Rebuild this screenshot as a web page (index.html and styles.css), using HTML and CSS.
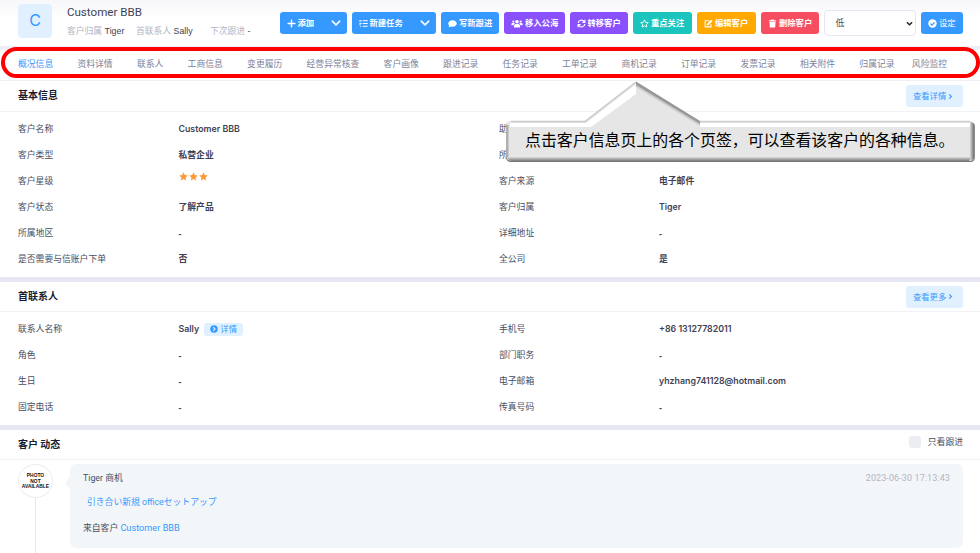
FILE: index.html
```html
<!DOCTYPE html>
<html lang="zh-CN">
<head>
    <meta charset="UTF-8">
    <meta name="viewport" content="width=device-width, initial-scale=1.0">
    <title>Customer BBB</title>
    <link rel="stylesheet" href="styles.css">
</head>
<body>
    <div class="page">
        <header class="header">
            <div class="avatar">C</div>
            <div class="customer">
                <div class="customer-name">Customer BBB</div>
                <div class="customer-meta">
                    <span class="meta-owner">客户归属 <b>Tiger</b></span>
                    <span class="meta-contact">首联系人 <b>Sally</b></span>
                    <span>下次跟进 <b>-</b></span>
                </div>
            </div>
            <div class="toolbar">
                <div class="btn blue w-add">
                    <svg viewBox="0 0 16 16"><path d="M8 2v12M2 8h12" stroke="#fff" stroke-width="2.6" stroke-linecap="round"/></svg>
                    <span>添加</span>
                    <svg class="caret" viewBox="0 0 16 16"><path d="M2 5l6 6 6-6" fill="none" stroke="#fff" stroke-width="2.4" stroke-linecap="round"/></svg>
                </div>
                <div class="btn blue w-task">
                    <svg viewBox="0 0 16 16"><path d="M.5 3l1.300 1.300L4.500 1.800M.5 8l1.300 1.300L4.500 6.800M6.500 3H15.500M6.500 8H15.500M6.500 13H15.500M1.500 13h2.200" fill="none" stroke="#fff" stroke-width="1.800"/></svg>
                    <span>新建任务</span>
                    <svg class="caret" viewBox="0 0 16 16"><path d="M2 5l6 6 6-6" fill="none" stroke="#fff" stroke-width="2.4" stroke-linecap="round"/></svg>
                </div>
                <div class="btn blue w-follow">
                    <svg viewBox="0 0 16 16"><path d="M8 2C3.800 2 .5 4.700.5 8c0 1.500.6 2.700 1.700 3.800C2 13 1 14.200.5 14.800c1.800 0 3.400-.7 4.500-1.500 1 .4 2 .6 3 .6 4.200 0 7.500-2.600 7.500-5.900S12.200 2 8 2z" fill="#fff"/></svg>
                    <span>写新跟进</span>
                </div>
                <div class="btn purple w-sea">
                    <svg class="wide" viewBox="0 0 20 16"><g fill="#fff"><circle cx="3.500" cy="4.500" r="2"/><circle cx="16.500" cy="4.500" r="2"/><circle cx="10" cy="5" r="3.200"/><path d="M0 11V9.500C0 8.200 1 7.300 2.200 7.300h2.600c.5 0 1 .2 1.400.5C4.900 8.600 4 9.700 3.900 11zM20 11V9.500c0-1.300-1-2.200-2.200-2.200h-2.600c-.5 0-1 .2-1.400.5 1.300.8 2.200 1.900 2.300 3.200zM4.500 14v-1.500C4.500 10.500 6 9 8 9h4c2 0 3.500 1.500 3.500 3.500V14c0 .6-.4 1-1 1h-9c-.6 0-1-.4-1-1z"/></g></svg>
                    <span>移入公海</span>
                </div>
                <div class="btn purple w-transfer">
                    <svg viewBox="0 0 16 16"><path d="M2 7a6 6 0 0 1 10.800-2.500M14 9A6 6 0 0 1 3.200 11.500M14 1.500V6H9.500M2 14.500V10h4.500" fill="none" stroke="#fff" stroke-width="2.100"/></svg>
                    <span>转移客户</span>
                </div>
                <div class="btn teal w-star">
                    <svg viewBox="0 0 16 16"><path d="M8 1.500l2 4.300 4.700.6-3.500 3.200.9 4.700L8 12l-4.100 2.300.9-4.700L1.300 6.400 6 5.800z" fill="none" stroke="#fff" stroke-width="1.600" stroke-linejoin="round"/></svg>
                    <span>重点关注</span>
                </div>
                <div class="btn orange w-edit">
                    <svg viewBox="0 0 16 16"><path d="M9.500 3H2v11h10.500V9.500" fill="none" stroke="#fff" stroke-width="1.900" stroke-linejoin="round"/><path d="M5.500 8.500L12.800 1.200l2.400 2.400L8 10.900l-3 .5z" fill="#fff"/></svg>
                    <span>编辑客户</span>
                </div>
                <div class="btn red w-delete">
                    <svg viewBox="0 0 16 16"><path d="M1.500 2h4l.8-1h3.400l.8 1h4v2h-13zM2.500 5h11l-.7 9c0 .8-.6 1.300-1.400 1.300H4.600c-.8 0-1.400-.5-1.400-1.300z" fill="#fff"/></svg>
                    <span>删除客户</span>
                </div>
                <div class="select">
                    <span>低</span>
                    <svg viewBox="0 0 16 16"><path d="M2 5l6 6 6-6" fill="none" stroke="#222" stroke-width="3.200"/></svg>
                </div>
                <div class="btn blue w-set">
                    <svg viewBox="0 0 16 16"><circle cx="8" cy="8" r="7.500" fill="#fff"/><path d="M4.300 8.200l2.700 2.600 4.700-5" fill="none" stroke="#3699ff" stroke-width="2"/></svg>
                    <span class="light">设定</span>
                </div>
            </div>
        </header>

        <nav class="tabs">
            <span class="tab active">概况信息</span>
            <span class="tab">资料详情</span>
            <span class="tab">联系人</span>
            <span class="tab">工商信息</span>
            <span class="tab">变更履历</span>
            <span class="tab">经营异常核查</span>
            <span class="tab">客户画像</span>
            <span class="tab">跟进记录</span>
            <span class="tab">任务记录</span>
            <span class="tab">工单记录</span>
            <span class="tab">商机记录</span>
            <span class="tab">订单记录</span>
            <span class="tab">发票记录</span>
            <span class="tab">相关附件</span>
            <span class="tab">归属记录</span>
            <span class="tab last">风险监控</span>
        </nav>

        <section class="card basic">
            <div class="card-head">
                <h3>基本信息</h3>
                <div class="more">查看详情<svg viewBox="0 0 8 12"><path d="M2 2.500l3.500 3.500L2 9.500" fill="none" stroke="#3699ff" stroke-width="2"/></svg></div>
            </div>
            <div class="fields">
                <div class="label">客户名称</div><div class="value">Customer BBB</div>
                <div class="label">助</div><div class="value"></div>
                <div class="label">客户类型</div><div class="value">私营企业</div>
                <div class="label">所</div><div class="value"></div>
                <div class="label">客户星级</div>
                <div class="value stars">
                    <svg viewBox="0 0 16 16"><path d="M8 .5l2.300 4.800 5.200.7-3.800 3.700.9 5.200L8 12.400l-4.600 2.500.9-5.200L.5 6l5.200-.7z"/></svg>
                    <svg viewBox="0 0 16 16"><path d="M8 .5l2.300 4.800 5.200.7-3.800 3.700.9 5.200L8 12.400l-4.600 2.500.9-5.200L.5 6l5.200-.7z"/></svg>
                    <svg viewBox="0 0 16 16"><path d="M8 .5l2.300 4.800 5.200.7-3.800 3.700.9 5.200L8 12.400l-4.600 2.500.9-5.200L.5 6l5.200-.7z"/></svg>
                </div>
                <div class="label">客户来源</div><div class="value">电子邮件</div>
                <div class="label">客户状态</div><div class="value">了解产品</div>
                <div class="label">客户归属</div><div class="value">Tiger</div>
                <div class="label">所属地区</div><div class="value dash">-</div>
                <div class="label">详细地址</div><div class="value dash">-</div>
                <div class="label">是否需要与信账户下单</div><div class="value">否</div>
                <div class="label">全公司</div><div class="value">是</div>
            </div>
        </section>

        <section class="card contact">
            <div class="card-head">
                <h3>首联系人</h3>
                <div class="more">查看更多<svg viewBox="0 0 8 12"><path d="M2 2.500l3.500 3.500L2 9.500" fill="none" stroke="#3699ff" stroke-width="2"/></svg></div>
            </div>
            <div class="fields">
                <div class="label">联系人名称</div>
                <div class="value">Sally
                    <span class="detail"><svg viewBox="0 0 16 16"><circle cx="8" cy="8" r="7.500" fill="#3699ff"/><path d="M6.300 4.200L10 8l-3.700 3.800" fill="none" stroke="#e1f0ff" stroke-width="2.200"/></svg>详情</span>
                </div>
                <div class="label">手机号</div><div class="value">+86 13127782011</div>
                <div class="label">角色</div><div class="value dash">-</div>
                <div class="label">部门职务</div><div class="value dash">-</div>
                <div class="label">生日</div><div class="value dash">-</div>
                <div class="label">电子邮箱</div><div class="value">yhzhang741128@hotmail.com</div>
                <div class="label">固定电话</div><div class="value dash">-</div>
                <div class="label">传真号码</div><div class="value dash">-</div>
            </div>
        </section>

        <section class="card activity">
            <div class="card-head">
                <h3>客户 动态</h3>
                <div class="only-follow"><i class="checkbox"></i>只看跟进</div>
            </div>
            <div class="timeline">
                <div class="rail">
                    <div class="photo">PHOTO<br>NOT<br>AVAILABLE</div>
                    <div class="rail-line"></div>
                </div>
                <div class="entry">
                    <div class="entry-top"><span>Tiger 商机</span><time>2023-06-30 17:13:43</time></div>
                    <div class="entry-link" lang="ja">引き合い新規 officeセットアップ</div>
                    <div class="entry-from">来自客户 <a>Customer BBB</a></div>
                </div>
            </div>
        </section>

        <!-- tab highlight and callout -->
        <div class="ring"></div>
        <div class="callout">
            <svg class="callout-shape" viewBox="0 0 474 88">
                <defs>
                    <linearGradient id="side" x1="0" x2="1" y1="0" y2="0">
                        <stop offset="0" stop-color="#d8d8d8"/>
                        <stop offset="1" stop-color="#666"/>
                    </linearGradient>
                    <linearGradient id="bottom" x1="0" x2="0" y1="0" y2="1">
                        <stop offset="0" stop-color="#dcdcdc"/>
                        <stop offset="1" stop-color="#777"/>
                    </linearGradient>
                    <filter id="soft"><feGaussianBlur stdDeviation="0.6"/></filter>
                </defs>
                <path d="M5 42H80L131 3 196 42H465Q470 42 470 47V77Q470 82 465 82H6Q1 82 1 77V47Q1 42 5 42Z" fill="#777" filter="url(#soft)"/>
                <path d="M6 41H80L131 1.500 195 41H464Q469.500 41 469.500 46V76Q469.500 81 464 81H7Q1.500 81 1.500 76V46Q1.500 41 6 41Z" fill="#e6e6e6"/>
                <path d="M6 41.500H80L131 2" fill="none" stroke="#cacaca" stroke-width="1.500"/>
                <path d="M5 43H81L131 4V14L86 47H5z" fill="#fff"/>
                <path d="M195 43H465V47H195z" fill="#fff"/>
                <path d="M195 41.500H465" stroke="#cfcfcf" stroke-width="1.500"/>
                <path d="M131 1.500L195 41V45L131 6z" fill="#999"/>
                <path d="M131 6L195 45" stroke="#cecece" stroke-width="2"/>
                <path d="M465 42Q469.500 42 469.500 46V76Q469.500 80 465 81z" fill="url(#side)"/>
                <path d="M2.500 45V77" stroke="#b0b0b0" stroke-width="2"/>
                <path d="M2 77H466L464 81H7Q3 81 2 77z" fill="url(#bottom)"/>
            </svg>
            <div class="callout-text">点击客户信息页上的各个页签，可以查看该客户的各种信息。</div>
        </div>
    </div>
</body>
</html>
```
FILE: styles.css
```css
* {
    box-sizing: border-box;
}
body {
    margin: 0;
    background: #fff;
    color: #464e5f;
    font-family: Inter, "Noto Sans CJK SC", sans-serif;
    font-size: 8.8px;
    line-height: 12px;
}
svg {
    display: block;
    flex: none;
}
.page {
    position: relative;
    width: 980px;
    height: 553px;
    overflow: hidden;
}

/* header */
.header {
    display: flex;
    height: 50px;
    padding: 4px 17px 0 18px;
    background: linear-gradient(#f7f7fa, #fff 18px);
    border-bottom: 4px solid #eeeff6;
}
.avatar {
    width: 34px;
    height: 34px;
    border-radius: 4px;
    background: #e1f0ff;
    color: #3699ff;
    font-size: 16px;
    line-height: 33px;
    text-align: center;
}
.customer {
    width: 228px;
    padding: 1px 0 0 15px;
    white-space: nowrap;
}
.customer-name {
    font-family: Roboto, Arial, sans-serif;
    font-size: 11.6px;
    line-height: 15px;
    color: #3f4254;
}
.customer-meta {
    display: flex;
    margin-top: 5px;
    color: #b5b5c3;
}
.customer-meta b {
    font-family: "Liberation Sans", Arial, sans-serif;
    font-weight: normal;
    color: #3f4254;
}
.meta-owner {
    width: 69px;
}
.meta-contact {
    width: 74px;
}
.toolbar {
    display: flex;
    flex: 1;
    gap: 5px;
    padding-top: 8px;
}
.btn {
    display: flex;
    align-items: center;
    height: 22px;
    padding-left: 7px;
    border-radius: 3px;
    color: #fff;
    font-size: 8.3px;
    font-weight: 700;
    white-space: nowrap;
}
.btn svg {
    width: 9px;
    height: 9px;
    margin-right: 2px;
}
.btn svg.wide {
    width: 12px;
    height: 9px;
}
.btn svg.caret {
    width: 10px;
    height: 10px;
    margin-left: auto;
    margin-right: 6px;
}
.btn .light {
    font-weight: 400;
}
.blue {
    background: #3699ff;
}
.purple {
    background: #8950fc;
}
.teal {
    background: #1bc5bd;
}
.orange {
    background: #ffa800;
}
.red {
    background: #f64e60;
}
.w-add {
    width: 67px;
}
.w-task {
    width: 84.5px;
}
.w-follow {
    width: 58px;
}
.w-sea {
    width: 60.5px;
}
.w-transfer {
    width: 58.5px;
}
.w-star {
    width: 59px;
}
.w-edit {
    width: 59px;
}
.w-delete {
    width: 57.5px;
}
.w-set {
    width: 42px;
}
.select {
    display: flex;
    justify-content: space-between;
    align-items: center;
    width: 92.5px;
    height: 26px;
    margin-top: -2px;
    padding: 0 2px 0 11px;
    border: 1px solid #e4e6ef;
    border-radius: 4px;
    background: #fff;
}
.select svg {
    width: 7px;
    height: 7px;
}

/* tabs */
.tabs {
    display: flex;
    gap: 24.27px;
    height: 31px;
    padding: 8px 0 0 18px;
    border-bottom: 1px solid #efeff4;
    color: #7e8299;
    white-space: nowrap;
}
.tab.active {
    height: 20px;
    border-bottom: 1px solid #3699ff;
    color: #3699ff;
}
.tab.last {
    margin-left: -7px;
}

/* cards */
.card-head {
    display: flex;
    justify-content: space-between;
    align-items: center;
    height: 30px;
    padding: 0 17px 0 18px;
    border-bottom: 1px solid #f1f2f6;
}
.card-head h3 {
    margin: 0 0 2px;
    font-size: 10px;
    font-weight: 700;
    color: #181c32;
}
.more {
    display: flex;
    align-items: center;
    width: 57px;
    height: 22px;
    padding-left: 7px;
    border-radius: 3px;
    background: #e1f0ff;
    color: #3699ff;
    font-size: 8.3px;
}
.more svg {
    width: 5px;
    height: 7px;
    margin-left: 2px;
}
.fields {
    display: grid;
    grid-template-columns: 160.5px 320.5px 160px 1fr;
    grid-auto-rows: 26.05px;
    align-items: center;
    padding: 4px 0 0 18px;
}
.value {
    display: flex;
    align-items: center;
    font-weight: 600;
    color: #3f4254;
}
.value.dash {
    padding-top: 2px;
    font-family: "Liberation Sans", Arial, sans-serif;
}
.basic {
    height: 201px;
    border-bottom: 5px solid #e6e7f2;
}
.basic .card-head {
    height: 31px;
}
.contact {
    height: 148px;
    border-bottom: 5px solid #e6e7f2;
}
.stars {
    gap: 1px;
    padding-bottom: 10px;
}
.stars svg {
    width: 9px;
    height: 9px;
    fill: #ff9a38;
}
.detail {
    display: flex;
    align-items: center;
    justify-content: center;
    gap: 2px;
    width: 39px;
    height: 13px;
    margin-left: 5px;
    border-radius: 3px;
    background: #e1f0ff;
    color: #3699ff;
    font-size: 8.3px;
    font-weight: 400;
}
.detail svg {
    width: 8px;
    height: 8px;
}

/* activity */
.only-follow {
    display: flex;
    align-items: center;
    gap: 7px;
    padding-bottom: 5px;
}
.checkbox {
    width: 12px;
    height: 12px;
    border-radius: 3px;
    background: #ebedf3;
}
.timeline {
    display: flex;
    padding: 4px 17px 0 18px;
}
.rail {
    display: flex;
    flex-direction: column;
    align-items: center;
    width: 35px;
    height: 93px;
}
.photo {
    width: 35px;
    height: 34px;
    padding-top: 8px;
    border: 1px solid #ebedf3;
    border-radius: 50%;
    color: #111;
    font-family: "Liberation Sans", Arial, sans-serif;
    font-size: 4.9px;
    font-weight: 700;
    line-height: 5.6px;
    text-align: center;
}
.rail-line {
    flex: 1;
    width: 1px;
    background: #e4e6ef;
}
.entry {
    position: relative;
    flex: 1;
    height: 84px;
    margin-left: 17px;
    padding: 8px 13px 0;
    border-radius: 6px;
    background: #f3f6f9;
    font-family: Roboto, "Noto Sans CJK SC", sans-serif;
}
.entry::before {
    content: "";
    position: absolute;
    left: -5px;
    top: 13px;
    border: 6px solid transparent;
    border-left: 0;
    border-right: 5px solid #f3f6f9;
}
.entry-top {
    display: flex;
    justify-content: space-between;
}
.entry-top time {
    color: #b5b5c3;
    font-size: 9px;
    letter-spacing: 0.1px;
}
.entry-link {
    margin: 12px 0 14px 4px;
    color: #3699ff;
    font-family: Roboto, "Noto Sans CJK JP", sans-serif;
}
.entry-from a {
    color: #3699ff;
    font-size: 9.2px;
}

/* overlays */
.ring {
    position: absolute;
    left: 1px;
    top: 47px;
    width: 979px;
    height: 31px;
    border: 4px solid #f00;
    border-radius: 16px;
}
.callout {
    position: absolute;
    left: 505px;
    top: 80px;
    width: 474px;
    height: 88px;
}
.callout-shape {
    width: 474px;
    height: 88px;
}
.callout-text {
    position: absolute;
    left: 20px;
    top: 48px;
    color: #000;
    font-family: "Noto Sans CJK SC", sans-serif;
    font-size: 15.92px;
    line-height: 24px;
    white-space: nowrap;
}
```
